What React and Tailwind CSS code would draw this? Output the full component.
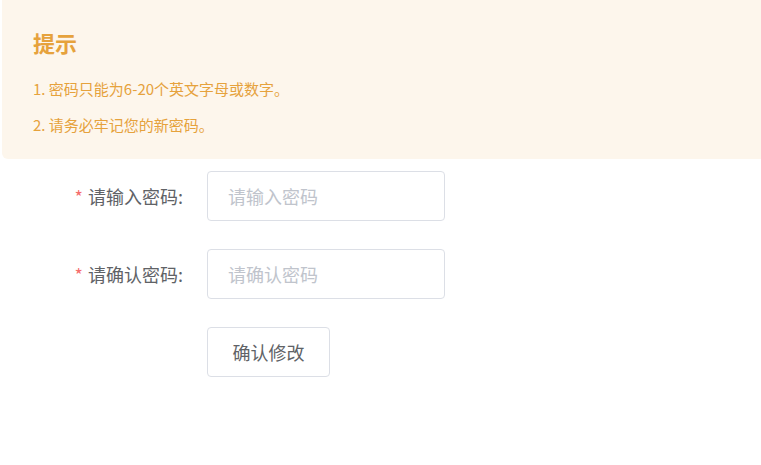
export default function App() {
  return (
    <div className="w-[761px] h-[465px] bg-white overflow-hidden font-['Noto_Sans_CJK_SC',sans-serif]">
      <div className="ml-[2px] h-[159px] bg-[#fdf6ec] rounded-bl-[6px] pl-[31px] pt-[27px] text-[#e6a23c]">
        <div className="text-[22px] leading-[30px] font-bold">提示</div>
        <div className="mt-[22px] text-[15px] leading-[20px]">1. 密码只能为6-20个英文字母或数字。</div>
        <div className="mt-[16px] text-[15px] leading-[20px]">2. 请务必牢记您的新密码。</div>
      </div>
      <div className="mt-[12px] flex flex-col gap-[28px]">
        <div className="flex items-center">
          <label className="w-[183px] text-right text-[18px] leading-[24px] text-[#606266] -mt-[1px]">
            <span className="text-[#f56c6c] mr-[5px]">*</span>请输入密码:
          </label>
          <input
            className="ml-[24px] w-[238px] h-[50px] border border-[#dcdfe6] rounded-[4px] px-[20px] text-[18px] text-[#606266] placeholder:text-[#c0c4cc] outline-none"
            placeholder="请输入密码"
            type="password"
          />
        </div>
        <div className="flex items-center">
          <label className="w-[183px] text-right text-[18px] leading-[24px] text-[#606266] -mt-[1px]">
            <span className="text-[#f56c6c] mr-[5px]">*</span>请确认密码:
          </label>
          <input
            className="ml-[24px] w-[238px] h-[50px] border border-[#dcdfe6] rounded-[4px] px-[20px] text-[18px] text-[#606266] placeholder:text-[#c0c4cc] outline-none"
            placeholder="请确认密码"
            type="password"
          />
        </div>
        <div className="flex">
          <button className="ml-[207px] w-[123px] h-[50px] border border-[#dcdfe6] rounded-[4px] bg-white text-[18px] text-[#606266]">
            确认修改
          </button>
        </div>
      </div>
    </div>
  );
}
